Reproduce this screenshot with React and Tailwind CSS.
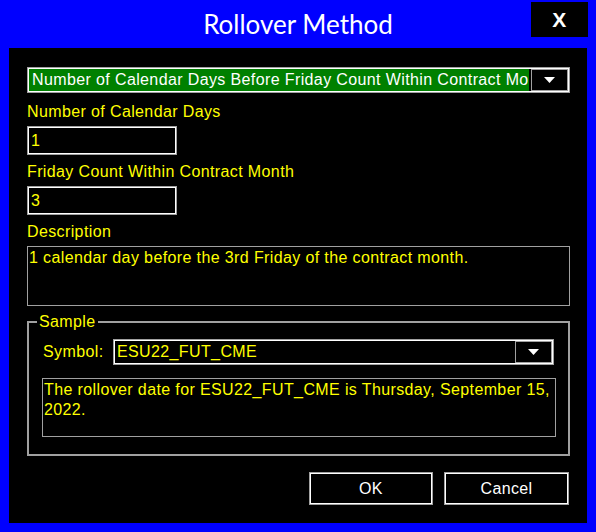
function Arrow() {
  return (
    <svg width="11" height="6" viewBox="0 0 11 6">
      <path d="M0 0h11L5.5 6z" fill="#fff" />
    </svg>
  )
}

function ComboBox({ children, className = '' }) {
  return (
    <div className={`flex h-[26px] border border-[#a0a0a0] p-px shadow-[inset_0_0_0_1px_#fff] ${className}`}>
      {children}
      <div className="flex w-[37px] shrink-0 items-center justify-center border border-[#a0a0a0] bg-black ml-[2px]">
        <Arrow />
      </div>
    </div>
  )
}

function TextBox({ value }) {
  return (
    <div className="flex h-[29px] w-[150px] items-center border border-[#a0a0a0] px-[3px] text-[#ffff00] shadow-[inset_0_0_0_1px_#fff]">
      {value}
    </div>
  )
}

export default function App() {
  return (
    <div className="flex h-[532px] w-[596px] flex-col bg-[#0000ff] font-['Liberation_Sans',Arial,sans-serif] text-[16px] leading-[20px] tracking-[0.38px]">
      {/* title bar */}
      <div className="relative flex h-[48px] shrink-0 items-start justify-center">
        <span className="mt-[8px] font-['Lato',sans-serif] text-[26px] leading-[32px] tracking-normal text-white">
          Rollover Method
        </span>
        <button className="absolute right-[8px] top-[2px] flex h-[35px] w-[57px] items-center justify-center bg-black text-[21px] font-bold text-white">
          X
        </button>
      </div>

      <div className="mx-[9px] mb-[9px] flex flex-1 flex-col bg-black pl-[18px] pr-[17px] pt-[19px]">
        <ComboBox>
          <div className="flex-1 overflow-hidden whitespace-nowrap bg-[#008000] pl-[3px] text-white leading-[22px]">
            Number of Calendar Days Before Friday Count Within Contract Month
          </div>
        </ComboBox>

        <div className="mt-[9px] text-[#ffff00]">Number of Calendar Days</div>
        <div className="mt-[4px]">
          <TextBox value="1" />
        </div>

        <div className="mt-[7px] text-[#ffff00]">Friday Count Within Contract Month</div>
        <div className="mt-[4px]">
          <TextBox value="3" />
        </div>

        <div className="mt-[7px] text-[#ffff00]">Description</div>
        <div className="mt-[4px] h-[60px] border border-[#a0a0a0] px-[1px] pt-[1px] text-[#ffff00]">
          1 calendar day before the 3rd Friday of the contract month.
        </div>

        <div className="relative mt-[15px] h-[135px] border-2 border-[#a0a0a0] pl-[13px] pr-[12px] pt-[16px]">
          <span className="absolute -top-[11px] left-[8px] bg-black px-[2px] text-[#ffff00]">Sample</span>
          <div className="flex items-center">
            <span className="w-[71px] pl-px text-[#ffff00]">Symbol:</span>
            <ComboBox className="flex-1">
              <div className="flex-1 bg-black pl-[2px] text-[#ffff00] leading-[22px]">ESU22_FUT_CME</div>
            </ComboBox>
            <span className="w-[2px]" />
          </div>
          <div className="mt-[13px] h-[59px] border border-[#a0a0a0] px-px pt-px text-[#ffff00]">
            The rollover date for ESU22_FUT_CME is Thursday, September 15, 2022.
          </div>
        </div>

        <div className="mt-[16px] flex justify-end gap-[11px] pr-px">
          <button className="h-[33px] w-[124px] border border-[#a0a0a0] text-white shadow-[inset_0_0_0_1px_#fff]">
            OK
          </button>
          <button className="h-[33px] w-[125px] border border-[#a0a0a0] text-white shadow-[inset_0_0_0_1px_#fff]">
            Cancel
          </button>
        </div>
      </div>
    </div>
  )
}
